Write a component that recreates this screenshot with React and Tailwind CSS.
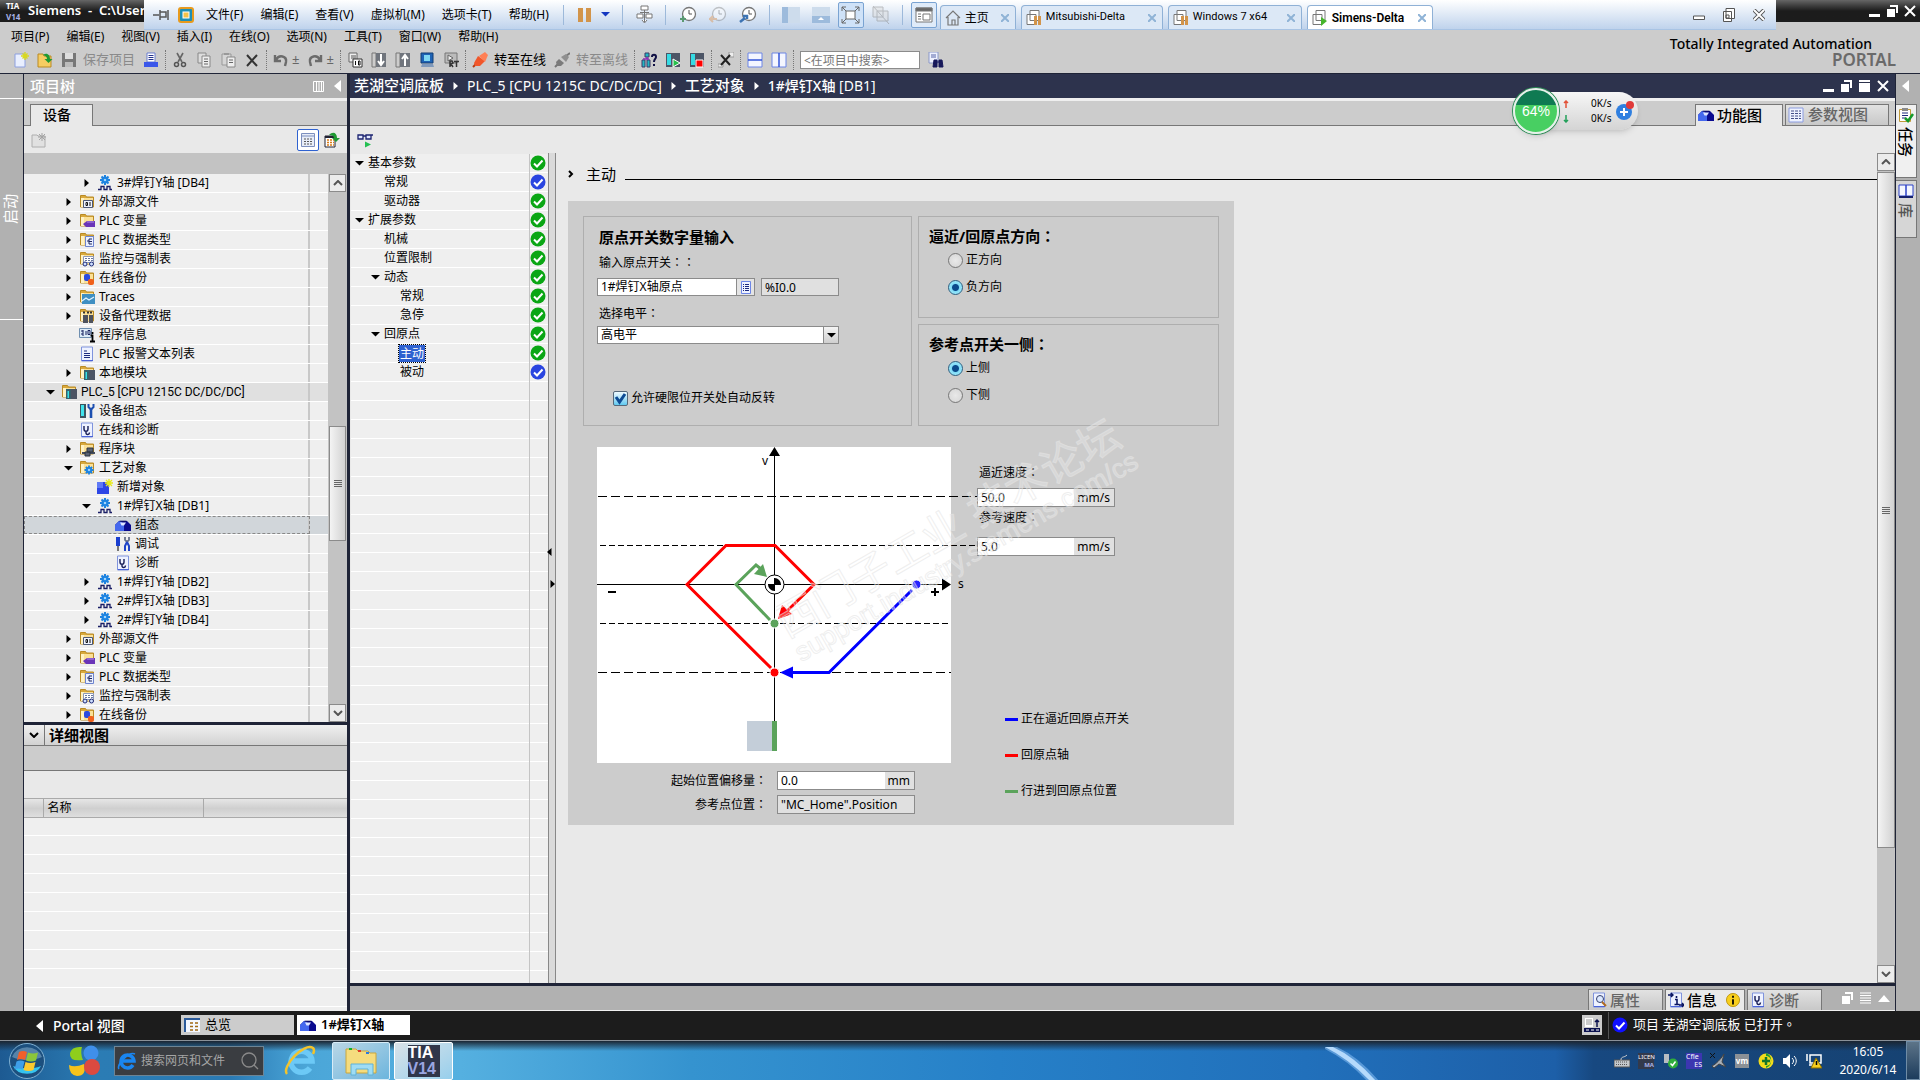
import { Fragment } from "react";

/* ---------- data ---------- */

const vmMenus = ["文件(F)", "编辑(E)", "查看(V)", "虚拟机(M)", "选项卡(T)", "帮助(H)"];

const tiaMenus = [
  "项目(P)",
  "编辑(E)",
  "视图(V)",
  "插入(I)",
  "在线(O)",
  "选项(N)",
  "工具(T)",
  "窗口(W)",
  "帮助(H)",
];

const treeRows = [
  { level: 2, icon: "axis", label: "3#焊钉Y轴 [DB4]", arrow: "right" },
  { level: 1, icon: "source", label: "外部源文件", arrow: "right" },
  { level: 1, icon: "tags", label: "PLC 变量", arrow: "right" },
  { level: 1, icon: "types", label: "PLC 数据类型", arrow: "right" },
  { level: 1, icon: "watch", label: "监控与强制表", arrow: "right" },
  { level: 1, icon: "backup", label: "在线备份", arrow: "right" },
  { level: 1, icon: "traces", label: "Traces", arrow: "right" },
  { level: 1, icon: "proxy", label: "设备代理数据", arrow: "right" },
  { level: 1, icon: "info", label: "程序信息" },
  { level: 1, icon: "textlist", label: "PLC 报警文本列表" },
  { level: 1, icon: "modules", label: "本地模块", arrow: "right" },
  { level: 0, icon: "modules", label: "PLC_5 [CPU 1215C DC/DC/DC]", arrow: "down", head: true },
  { level: 1, icon: "device", label: "设备组态" },
  { level: 1, icon: "diag", label: "在线和诊断" },
  { level: 1, icon: "blocks", label: "程序块", arrow: "right" },
  { level: 1, icon: "tech", label: "工艺对象", arrow: "down" },
  { level: 2, icon: "newobj", label: "新增对象" },
  { level: 2, icon: "axis", label: "1#焊钉X轴 [DB1]", arrow: "down" },
  { level: 3, icon: "toolbox", label: "组态", selected: true },
  { level: 3, icon: "tools", label: "调试" },
  { level: 3, icon: "diag", label: "诊断" },
  { level: 2, icon: "axis", label: "1#焊钉Y轴 [DB2]", arrow: "right" },
  { level: 2, icon: "axis", label: "2#焊钉X轴 [DB3]", arrow: "right" },
  { level: 2, icon: "axis", label: "2#焊钉Y轴 [DB4]", arrow: "right" },
  { level: 1, icon: "source", label: "外部源文件", arrow: "right" },
  { level: 1, icon: "tags", label: "PLC 变量", arrow: "right" },
  { level: 1, icon: "types", label: "PLC 数据类型", arrow: "right" },
  { level: 1, icon: "watch", label: "监控与强制表", arrow: "right" },
  { level: 1, icon: "backup", label: "在线备份", arrow: "right" },
];

const navRows = [
  { level: 0, label: "基本参数", open: true, state: "green" },
  { level: 1, label: "常规", state: "blue" },
  { level: 1, label: "驱动器", state: "green" },
  { level: 0, label: "扩展参数", open: true, state: "green" },
  { level: 1, label: "机械", state: "green" },
  { level: 1, label: "位置限制", state: "green" },
  { level: 1, label: "动态", open: true, state: "green" },
  { level: 2, label: "常规", state: "green" },
  { level: 2, label: "急停", state: "green" },
  { level: 1, label: "回原点", open: true, state: "green" },
  { level: 2, label: "主动", state: "green", selected: true },
  { level: 2, label: "被动", state: "blue" },
];

const legend = [
  { color: "bg-[#0000ff]", label: "正在逼近回原点开关" },
  { color: "bg-[#ff0000]", label: "回原点轴" },
  { color: "bg-[#5ba35b]", label: "行进到回原点位置" },
];

/* ---------- icons ---------- */

const Svg = ({ size = 16, children, className = "" }) => (
  <svg width={size} height={size} viewBox="0 0 16 16" className={`shrink-0 ${className}`} aria-hidden="true">
    {children}
  </svg>
);

const Folder = () => (
  <>
    <path d="M1.500 1.500h5l1 1.500h7v10h-13z" fill="#d9a93c" stroke="#b98a24" />
    <path d="M2 4h12v9H2z" fill="#fbe096" />
    <path d="M2 4h3v9H2z" fill="#fff2c4" />
  </>
);

const Gear = ({ x = 8, y = 5, s = 1 }) => (
  <g transform={`translate(${x} ${y}) scale(${s})`} stroke="#1e83e0" strokeWidth="2">
    <path d="M0-5V5M-5 0H5M-3.500-3.500L3.500 3.500M3.500-3.500L-3.500 3.500" />
    <circle r="2.6" fill="#2f9bf2" />
    <circle r="1" fill="#cfe8ff" stroke="none" />
  </g>
);

const Page = () => (
  <>
    <path d="M2.500 1h11v14h-11z" fill="#eef2ff" stroke="#7f93dd" />
    <path d="M3 14.500h11" stroke="#4a63d8" />
  </>
);

const Scope = () => (
  <path d="M5 4v3c0 3 4 3 4 0V4M7 9.500v1.500c0 2 3.500 2 3.500-.5" fill="none" stroke="#151b55" strokeWidth="1.400" />
);

const Toolbox = () => (
  <>
    <path d="M0 8l4-4h8l4 4v6H0z" fill="#0b0b8f" />
    <path d="M0 8l4-4h2l3 4v6H0z" fill="#4468ee" />
    <path d="M5 5.500h6l-2 3H6.500z" fill="#dfe6ff" />
    <path d="M4.500 4.200h7" stroke="#0a0a60" />
  </>
);

const treeIcons = {
  axis: (
    <>
      <Gear />
      <path d="M1 14.500h3v-3h3v3h3v-3h3v3h2" fill="none" stroke="#1a1f66" strokeWidth="1.300" />
    </>
  ),
  source: (
    <>
      <Folder />
      <path d="M4.500 6.500h9v7h-9z" fill="#eef3ff" stroke="#4b5877" />
      <path d="M7 8.500h1.500v3H7zM11 8v4" fill="none" stroke="#111" />
    </>
  ),
  tags: (
    <>
      <Folder />
      <path d="M4 11l4-3h8v6H7z" fill="#6a35b8" />
      <path d="M8 9h7" stroke="#b08ae6" />
    </>
  ),
  types: (
    <>
      <Folder />
      <path d="M6.500 4.500h8v10h-8z" fill="#eaf0ff" stroke="#6d84cf" />
      <path d="M8 9h2M10 7v5M10 7h3M10 9.500h3M10 12h3" stroke="#1c2660" />
    </>
  ),
  watch: (
    <>
      <Folder />
      <path d="M4.500 5.500h10v6h-10z" fill="#fff" stroke="#8b98bb" />
      <path d="M6 7.500h8M6 9.500h8" stroke="#68789f" strokeDasharray="2 1" />
      <circle cx="6" cy="13" r="2" fill="#cfe0ff" stroke="#1d2a7a" />
      <circle cx="12.500" cy="13" r="2" fill="#cfe0ff" stroke="#1d2a7a" />
    </>
  ),
  backup: (
    <>
      <Folder />
      <rect x="5" y="4" width="6" height="7" rx="2" fill="#2c4be0" />
      <rect x="9" y="9" width="6" height="6" rx="2" fill="#f0611c" />
    </>
  ),
  traces: (
    <>
      <Folder />
      <path d="M3 5h13v10H3z" fill="#3f8fc2" />
      <path d="M3 12l4-3 3 2 5-3" fill="none" stroke="#dff2ff" strokeWidth="1.300" />
    </>
  ),
  proxy: (
    <>
      <Folder />
      <path d="M4 7h5v8H4zM10 7h4v8h-4z" fill="#4e535e" />
      <path d="M4 4.500h2M8 4.500h2M11 4.500h2" stroke="#333" strokeWidth="2" />
    </>
  ),
  info: (
    <>
      <path d="M.5 1.500h12v9H.5z" fill="#dcebf8" stroke="#6f8fb0" />
      <path d="M2 4h2M2 7h2M4 3v6M7 4v4M9 3.500h2v4H9z" fill="none" stroke="#16205e" />
      <path d="M13.500 5v2M11.500 8.500h2V14M11 14.500h5" fill="none" stroke="#000" strokeWidth="1.800" />
    </>
  ),
  textlist: (
    <>
      <Page />
      <path d="M5 5h3M5 7.500h6M5 9.500h6M5 11.500h6" stroke="#1c2a7e" />
    </>
  ),
  modules: (
    <>
      <Folder />
      <path d="M5 5h5v10H5z" fill="#37616c" />
      <path d="M6.500 7h1.500v7H6.500z" fill="#35e0e8" />
      <path d="M10 5h6v10h-6z" fill="#4c5464" />
    </>
  ),
  device: (
    <>
      <path d="M1 1h6v14H1z" fill="#3c5560" />
      <path d="M2 2h3v11H2z" fill="#3fe3ec" />
      <path d="M12 6v9" stroke="#1c4fb0" strokeWidth="2.600" />
      <path d="M9.500 1v3L12 6.500 14.500 4V1" fill="none" stroke="#1c4fb0" strokeWidth="2" />
    </>
  ),
  diag: (
    <>
      <Page />
      <Scope />
    </>
  ),
  blocks: (
    <>
      <Folder />
      <path d="M3 12h13" stroke="#444d5c" strokeWidth="2" />
      <path d="M8 7h6v4H8zM6 11h5v4H6z" fill="#596273" stroke="#2d3440" />
    </>
  ),
  tech: (
    <>
      <Folder />
      <Gear x={10} y={10} s={0.9} />
    </>
  ),
  newobj: (
    <>
      <path d="M0 3h12v12H0z" fill="#2d46e6" />
      <path d="M0 3h6v6H0z" fill="#5f79f5" />
      <path d="M12 0v8M8 4h8M9 1l6 6M15 1L9 7" stroke="#e8ea1a" strokeWidth="1.300" />
    </>
  ),
  toolbox: <Toolbox />,
  tools: (
    <>
      <path d="M1 1h4v9H1z" fill="#1a3fd0" />
      <path d="M3 10v5" stroke="#777" strokeWidth="2" />
      <path d="M10 1v3l2 2 2-2V1" fill="none" stroke="#66708a" strokeWidth="1.800" />
      <path d="M12 6l-2 4v5M12 6l2 4v5" fill="none" stroke="#1f44c8" strokeWidth="2" />
    </>
  ),
};

const toolIcons = {
  new: (
    <>
      <path d="M2 2h10v13H2z" fill="#e9efff" stroke="#8da0e0" />
      <path d="M12 0v8M8 4h8M9.500 1.500l5 5M14.500 1.500l-5 5" stroke="#d8d81e" strokeWidth="1.400" />
    </>
  ),
  open: (
    <>
      <path d="M1 2h5l1 2h7v11H1z" fill="#f6cd62" stroke="#b98a24" />
      <path d="M6 3c4-3 7 0 7 4h2.500l-4 4-4-4H10c0-2-1-3-4-4z" fill="#1f9a32" />
    </>
  ),
  save: (
    <>
      <path d="M1 1h14v14H1z" fill="#777" />
      <path d="M4 1h8v6H4z" fill="#ddd" />
      <path d="M4 10h8v5H4z" fill="#bbb" />
    </>
  ),
  print: (
    <>
      <path d="M4 1h8v9H4z" fill="#fff" stroke="#6a7fd0" />
      <path d="M5.500 3.500h5M5.500 5.500h5M5.500 7.500h5" stroke="#24348e" />
      <path d="M1 10h14v5H1z" fill="#3b57ea" />
    </>
  ),
  cut: (
    <>
      <path d="M5 1l5 9M11 1L6 10" stroke="#666" strokeWidth="1.600" />
      <circle cx="4.500" cy="12.500" r="2" fill="none" stroke="#555" strokeWidth="1.500" />
      <circle cx="11.500" cy="12.500" r="2" fill="none" stroke="#555" strokeWidth="1.500" />
    </>
  ),
  copy: (
    <>
      <path d="M2 1h8v10H2z" fill="#ddd" stroke="#888" />
      <path d="M6 4h8v11H6z" fill="#eee" stroke="#888" />
      <path d="M8 7h4M8 9.500h4M8 12h4" stroke="#666" />
    </>
  ),
  paste: (
    <>
      <path d="M2 2h9v11H2z" fill="#d5d5d5" stroke="#999" />
      <path d="M4 1h5v2H4z" fill="#999" />
      <path d="M7 5h8v10H7z" fill="#eee" stroke="#888" />
      <path d="M9 8h4M9 10.500h4" stroke="#666" />
    </>
  ),
  delete: <path d="M3 3l10 11M13 3L3 14" stroke="#333" strokeWidth="2" />,
  undo: <path d="M2 3v6h6M3 8c3-6 11-4 10 2l-1 4" fill="none" stroke="#6b6b6b" strokeWidth="2.400" />,
  redo: <path d="M14 3v6H8M13 8C10 2 2 4 3 10l1 4" fill="none" stroke="#6b6b6b" strokeWidth="2.400" />,
  compile: (
    <>
      <path d="M2 1h8v9H2z" fill="#eee" stroke="#666" />
      <path d="M4 4h5M4 6h5" stroke="#555" />
      <path d="M6 7h9v8H6z" fill="#fff" stroke="#333" />
      <path d="M8.500 9v4M11.500 9h1.500v4h-1.500z" fill="none" stroke="#111" />
    </>
  ),
  down: (
    <>
      <path d="M1 1h4v14H1z" fill="#ccc" stroke="#777" />
      <path d="M5 1h10v14H5z" fill="#70757d" />
      <path d="M10 2v10M7 9l3 4 3-4" fill="none" stroke="#fff" strokeWidth="2" />
    </>
  ),
  up: (
    <>
      <path d="M1 1h4v14H1z" fill="#ccc" stroke="#777" />
      <path d="M5 1h10v14H5z" fill="#70757d" />
      <path d="M10 14V4M7 7l3-4 3 4" fill="none" stroke="#fff" strokeWidth="2" />
    </>
  ),
  sim: (
    <>
      <path d="M2 1h12v10H2z" fill="#1e63b5" stroke="#123e74" />
      <path d="M5 3h6v6H5z" fill="#7fd7f2" />
      <path d="M3 12h11l1 3H2z" fill="#7f99bb" />
    </>
  ),
  rt: (
    <>
      <path d="M2 1h12v10H2z" fill="#bbb" stroke="#777" />
      <path d="M5 3l5 3-5 3z" fill="#eee" stroke="#666" />
      <path d="M7 15V9h2l1 2-2 1 2 3M11 9.500h5M13.500 9v6" fill="none" stroke="#333" strokeWidth="1.500" />
    </>
  ),
  online: (
    <>
      <path d="M1 15l4-4" stroke="#b33a10" strokeWidth="2" />
      <path d="M2 11l4-7 7 5-5 5H3z" fill="#f0562a" />
      <path d="M7 4l6-4 3 3-3 7z" fill="#ff8055" />
    </>
  ),
  offline: (
    <>
      <path d="M1 15l3-3M12 4l4-3" stroke="#777" strokeWidth="2" />
      <path d="M2 10l3-3 5 4-3 3H3z" fill="#7b7b7b" />
      <path d="M7 5l5-3 3 3-3 5z" fill="#8f8f8f" />
    </>
  ),
  nodes: (
    <>
      <path d="M4 1h4v4H4zM1 8h3v7H1zM6 8h3v7H6z" fill="#23b8c4" stroke="#3a3a66" />
      <path d="M6 5v2M2 7h6" stroke="#8a2ab5" strokeWidth="1.500" />
      <path d="M11 5c0-3 4-3 4 0 0 2-2 2-2 5M13 12v2" fill="none" stroke="#101044" strokeWidth="2" />
    </>
  ),
  start: (
    <>
      <path d="M1 1h14v14H1z" fill="#4c5566" />
      <path d="M2 2h4v11H2z" fill="#36dbe4" />
      <path d="M8 7l7 4-7 4z" fill="#26c04c" stroke="#fff" />
    </>
  ),
  stop: (
    <>
      <path d="M1 1h14v14H1z" fill="#4c5566" />
      <path d="M2 2h4v11H2z" fill="#36dbe4" />
      <path d="M7 8h7v7H7z" fill="#f00" stroke="#fff" />
    </>
  ),
  cross: (
    <>
      <path d="M11 0h5v5h-5zM0 12h5v3H0z" fill="#eee" stroke="#999" />
      <path d="M3 3l9 10M12 3L3 13" stroke="#222" strokeWidth="2" />
    </>
  ),
  splitH: (
    <>
      <path d="M1 1h14v14H1z" fill="#f4f6ff" stroke="#6d86e6" />
      <path d="M1 8h14" stroke="#3355d8" strokeWidth="1.500" />
    </>
  ),
  splitV: (
    <>
      <path d="M1 1h14v14H1z" fill="#f4f6ff" stroke="#6d86e6" />
      <path d="M8 1v14" stroke="#3355d8" strokeWidth="1.500" />
    </>
  ),
  find: (
    <>
      <path d="M1 0h9v11H1z" fill="#eef1ff" stroke="#8a98c8" />
      <path d="M3 3h5M3 5h5" stroke="#5866a8" />
      <path d="M6 8h3v7H5zM11 8h3l1 7h-4zM9 10h2" fill="#17185a" stroke="#17185a" />
    </>
  ),
};

const ToolButton = ({ name, label }) => (
  <button aria-label={label} className="flex shrink-0">
    <Svg>{toolIcons[name]}</Svg>
  </button>
);

const ToolSep = () => <span className="-mx-[2px] h-5 border-l border-dotted border-[#777]" />;

const Arrow = ({ dir, className = "" }) => (
  <svg width="9" height="9" viewBox="0 0 9 9" className={`shrink-0 ${className}`} fill="currentColor" aria-hidden="true">
    {dir === "down" ? <path d="M0 2h9L4.500 6.500z" /> : <path d="M2.500 0v8L7 4z" />}
  </svg>
);

const StateIcon = ({ state }) => (
  <Svg>
    <circle cx="8" cy="8" r="7.500" fill={state === "green" ? "#0aa614" : "#2a45e0"} />
    <path d="M4 8.500l3 3 5.500-6" fill="none" stroke="#fff" strokeWidth="2" />
  </Svg>
);

/* ---------- shared parts ---------- */

// full-width punctuation centred in its cell
const Mark = ({ children = "：" }) => (
  <span className="font-['Noto_Sans_CJK_TC',sans-serif] leading-none">{children}</span>
);

const ScrollButton = ({ dir }) => (
  <button
    aria-label={dir === "up" ? "向上滚动" : "向下滚动"}
    className="flex h-[18px] shrink-0 items-center justify-center border border-[#8b8b8b] bg-[#ececec]"
  >
    <svg width="10" height="6" viewBox="0 0 10 6" fill="none" stroke="#555" strokeWidth="2" aria-hidden="true">
      {dir === "up" ? <path d="M1 5l4-4 4 4" /> : <path d="M1 1l4 4 4-4" />}
    </svg>
  </button>
);

const Grip = () => (
  <span className="flex w-2 flex-col gap-px">
    <i className="h-px bg-[#666]" />
    <i className="h-px bg-[#666]" />
    <i className="h-px bg-[#666]" />
    <i className="h-px bg-[#666]" />
  </span>
);

const WindowIcons = () => (
  <div className="ml-auto flex items-center gap-[7px] text-white">
    <svg width="11" height="12" viewBox="0 0 11 12" aria-hidden="true"><path d="M0 10.500h11" stroke="currentColor" strokeWidth="3" /></svg>
    <svg width="11" height="12" viewBox="0 0 11 12" fill="currentColor" aria-hidden="true"><path d="M3 0h8v8H9V2H3zM0 4h8v8H0z" /></svg>
  </div>
);

const CloseX = ({ className = "" }) => (
  <svg width="12" height="12" viewBox="0 0 12 12" className={className} fill="none" stroke="currentColor" strokeWidth="2" aria-hidden="true">
    <path d="M1 1l10 10M11 1L1 11" />
  </svg>
);

/* ---------- VMware strip ---------- */

const VmTab = ({ label, icon, active, className = "" }) => (
  <div
    className={`mr-[5px] flex h-6 items-center rounded-t-sm border border-b-0 border-[#8fb1d6] pl-1 pr-[6px] ${className}
      ${active ? "bg-white font-semibold" : "bg-[#dce8f6]"}`}
  >
    <Svg className="mr-1">{icon}</Svg>
    <button className="flex-1 whitespace-nowrap text-left">{label}</button>
    <button aria-label="关闭" className="text-[#8fb3d6]">
      <svg width="8" height="8" viewBox="0 0 8 8" stroke="currentColor" strokeWidth="2" aria-hidden="true">
        <path d="M0 0l8 8M8 0L0 8" />
      </svg>
    </button>
  </div>
);

const vmPages = <path d="M4 .5h9v10H4zM1 4.500h9v10H1z" fill="#fff" stroke="#777" />;

const VmSep = ({ className = "" }) => <span className={`h-5 w-px bg-[#9db9da] ${className}`} />;

const Clock = ({ faded, children }) => (
  <svg width="18" height="18" viewBox="0 0 18 18" fill="none" className={faded ? "opacity-40" : ""} aria-hidden="true">
    <circle cx="10" cy="8" r="6.500" fill="#fff" stroke="#777" strokeWidth="1.300" />
    <path d="M10 4v4h3" stroke="#555" />
    {children}
  </svg>
);

const VmBar = () => (
  <div className="absolute left-36 right-36 top-0 z-20 flex h-[30px] items-center border-b border-[#a9c4e4] bg-linear-to-b from-white to-[#bfd3ec] text-xs text-black">
    <svg width="17" height="12" viewBox="0 0 17 12" className="ml-[9px] shrink-0" fill="none" stroke="#555" aria-hidden="true">
      <path d="M0 6h6M7 1v10M7 3h6v5H7M15 1v10" strokeWidth="1.500" />
    </svg>
    <svg width="18" height="18" viewBox="0 0 18 18" className="ml-[7px] shrink-0" aria-hidden="true">
      <rect x="1" y="1" width="16" height="16" rx="3" fill="#e79a1e" />
      <rect x="3" y="3" width="12" height="12" rx="1" fill="#1d8fb6" />
      <rect x="6" y="6" width="6" height="6" fill="#f4c14a" stroke="#fff" />
    </svg>
    <nav className="ml-[11px] flex gap-[17px] whitespace-nowrap">
      {vmMenus.map((m) => (
        <button key={m}>{m}</button>
      ))}
    </nav>
    <VmSep className="ml-[14px]" />
    <svg width="13" height="14" viewBox="0 0 13 14" className="ml-[14px] shrink-0" fill="#d2944a" aria-hidden="true"><path d="M0 0h5v14H0zM8 0h5v14H8z" /></svg>
    <Arrow dir="down" className="ml-[10px] text-[#1437c0]" />
    <VmSep className="ml-3" />
    <svg width="17" height="19" viewBox="0 0 17 19" className="ml-[13px] shrink-0" fill="#fff" stroke="#777" aria-hidden="true">
      <path d="M5 1h7v4H5zM1 9h6v4H1zM10 9h6v4h-6zM8.500 5v12M4 7.500h9M6 15l2.500 3 2.500-3" />
    </svg>
    <VmSep className="ml-3" />
    <div className="ml-[13px] flex gap-3">
      <Clock><path d="M1 13h6M4 10v6" stroke="#5b9a72" strokeWidth="2" /></Clock>
      <Clock faded><path d="M0 13h8M4 10l-3 3 3 3" stroke="#e08a3a" strokeWidth="2" /></Clock>
      <Clock><path d="M1 16l5-4M4 10h4v3" stroke="#3d74b3" strokeWidth="2.500" /></Clock>
    </div>
    <VmSep className="ml-3" />
    <svg width="18" height="18" viewBox="0 0 18 18" className="ml-3 shrink-0" aria-hidden="true">
      <path d="M0 1h18v16H0z" fill="#cddcec" /><path d="M0 1h6v16H0z" fill="#9dbbdc" />
    </svg>
    <svg width="18" height="18" viewBox="0 0 18 18" className="ml-3 shrink-0" aria-hidden="true">
      <path d="M0 1h18v16H0z" fill="#cddcec" /><path d="M0 10h18v7H0z" fill="#9dbbdc" /><path d="M6 14h6l-3-3z" fill="#fff" />
    </svg>
    <button aria-label="全屏" className="ml-2 flex h-[26px] w-[26px] items-center justify-center rounded-xs border border-[#7aa3d2] bg-[#cfe2f8]">
      <svg width="19" height="18" viewBox="0 0 19 18" fill="none" stroke="#666" aria-hidden="true">
        <path d="M5 5h9v8H5z" fill="#fff" />
        <path d="M1 5V1h4M14 1h4v4M18 13v4h-4M5 17H1v-4M1 1l4 4M18 1l-4 4M18 17l-4-4M1 17l4-4" />
      </svg>
    </button>
    <svg width="18" height="20" viewBox="0 0 18 20" className="ml-2 shrink-0 opacity-50" fill="#ddd" stroke="#888" aria-hidden="true">
      <path d="M1 2h10v10H1zM5 6h11v10H5zM1 1l16 18" />
    </svg>
    <VmSep className="ml-3" />
    <button aria-label="控制台视图" className="ml-2 flex h-[26px] w-[26px] items-center justify-center rounded-xs border border-[#7aa3d2] bg-[#dfebf9]">
      <svg width="18" height="16" viewBox="0 0 18 16" fill="#fff" stroke="#777" aria-hidden="true">
        <path d="M1 1h16v14H1zM8 7h7v6H8z" /><path d="M1 1h16v3H1z" fill="#666" /><path d="M3 7h3M3 9.500h3M3 12h3" />
      </svg>
    </button>
    <div className="ml-[3px] flex self-end font-['Roboto','Noto_Sans_CJK_SC',sans-serif] text-[11px]">
      <VmTab label="主页" className="w-[76px] text-xs" icon={<path d="M1 8l7-7 7 7M3 7v8h10V7M7 15v-5h3v5" fill="none" stroke="#777" strokeWidth="1.200" />} />
      <VmTab label="Mitsubishi-Delta" className="w-[142px]" icon={<>{vmPages}<path d="M8 6h3v9H8zM12 6h3v9h-3z" fill="#d2944a" /></>} />
      <VmTab label="Windows 7 x64" className="w-[134px]" icon={<>{vmPages}<path d="M8 6h3v9H8zM12 6h3v9h-3z" fill="#d2944a" /></>} />
      <VmTab label="Simens-Delta" active className="w-[126px] text-xs" icon={<>{vmPages}<path d="M9 7l6 4-6 5z" fill="#46b52c" /></>} />
    </div>
    <div className="ml-auto mr-[11px] flex items-center gap-[18px] text-[#555]">
      <svg width="12" height="12" viewBox="0 0 12 12" fill="#fff" stroke="currentColor" aria-hidden="true"><path d="M.5 7h11v3.500H.5z" /></svg>
      <svg width="12" height="14" viewBox="0 0 12 14" fill="#fff" stroke="currentColor" aria-hidden="true"><path d="M3 .5h8.500v10H3zM.5 3.500h8v10h-8zM3 7h3v3H3z" /></svg>
      <svg width="12" height="12" viewBox="0 0 12 12" fill="none" aria-hidden="true"><path d="M1 1l10 10M11 1L1 11" stroke="#555" strokeWidth="4" /><path d="M1 1l10 10M11 1L1 11" stroke="#fff" strokeWidth="2" /></svg>
    </div>
  </div>
);

/* ---------- TIA header ---------- */

const Header = () => (
  <header className="relative shrink-0 bg-[#ccc]">
    <div className="flex h-[22px] items-center bg-linear-to-b from-[#666] via-[#1c1c1c] to-[#1c1c1c] pl-[6px] pr-1 text-[13px] font-semibold text-white">
      <span className="mr-1 flex w-[18px] flex-col text-[8px] font-bold leading-[11px]">
        <span>TIA</span>
        <span className="text-[#a9b2e6]">V14</span>
      </span>
      <span className="whitespace-pre">Siemens  -  C:\User</span>
      <WindowIcons />
      <CloseX className="ml-[6px]" />
    </div>
    <nav className="flex h-[30px] items-center gap-[17px] pl-[11px] text-xs">
      {tiaMenus.map((m) => (
        <button key={m} className="whitespace-nowrap">{m}</button>
      ))}
    </nav>
    <div className="flex h-[21px] items-center gap-2 pb-[5px] pl-[13px] text-[13px]">
      <ToolButton name="new" label="新建" />
      <ToolButton name="open" label="打开" />
      <button className="flex items-center gap-[6px] whitespace-nowrap text-[#8a8a8a]">
        <Svg>{toolIcons.save}</Svg>
        保存项目
      </button>
      <ToolButton name="print" label="打印" />
      <ToolSep />
      <ToolButton name="cut" label="剪切" />
      <ToolButton name="copy" label="复制" />
      <ToolButton name="paste" label="粘贴" />
      <ToolButton name="delete" label="删除" />
      <ToolSep />
      <span className="flex items-center gap-[3px]">
        <ToolButton name="undo" label="撤销" />
        <span className="text-[#666]">±</span>
      </span>
      <span className="flex items-center gap-[3px]">
        <ToolButton name="redo" label="重做" />
        <span className="text-[#666]">±</span>
      </span>
      <ToolSep />
      <ToolButton name="compile" label="编译" />
      <ToolButton name="down" label="下载" />
      <ToolButton name="up" label="上传" />
      <ToolButton name="sim" label="仿真" />
      <ToolButton name="rt" label="运行系统" />
      <ToolSep />
      <button className="flex items-center gap-[6px] whitespace-nowrap"><Svg>{toolIcons.online}</Svg>转至在线</button>
      <button className="flex items-center gap-[6px] whitespace-nowrap text-[#8a8a8a]"><Svg>{toolIcons.offline}</Svg>转至离线</button>
      <ToolSep />
      <ToolButton name="nodes" label="可访问的设备" />
      <ToolButton name="start" label="启动 CPU" />
      <ToolButton name="stop" label="停止 CPU" />
      <ToolSep />
      <ToolButton name="cross" label="交叉引用" />
      <ToolSep />
      <ToolButton name="splitH" label="水平拆分" />
      <ToolButton name="splitV" label="垂直拆分" />
      <ToolSep />
      <input
        aria-label="在项目中搜索"
        placeholder="<在项目中搜索>"
        className="h-[18px] w-[120px] border border-[#8b8b8b] bg-white px-[3px] text-xs placeholder:text-[#777]"
      />
      <ToolButton name="find" label="查找" />
    </div>
    <div className="absolute right-6 top-[35px] flex flex-col text-right">
      <p className="mr-6 text-sm font-medium leading-[17px]">Totally Integrated Automation</p>
      <p className="text-[17px] font-semibold leading-[15px] text-[#6a6a6a]">PORTAL</p>
    </div>
    <VmBar />
  </header>
);

/* ---------- project tree ---------- */

const TreeRow = ({ row }) => (
  <li
    className={`flex h-[19px] border-b border-white
      ${row.selected ? "bg-[#d1d6da]" : row.head ? "bg-[#e0e0e0]" : "bg-[#efefef]"}`}
  >
    <button
      className={`flex min-w-0 flex-1 items-center whitespace-nowrap border-r-2 border-[#c8c8c8] text-left
        ${row.selected ? "outline-1 -outline-offset-1 outline-dashed outline-[#888]" : ""}`}
      style={{ paddingLeft: 22 + row.level * 18 }}
    >
      <span className="mr-[6px] flex w-[9px]">{row.arrow && <Arrow dir={row.arrow} />}</span>
      <Svg className="mr-1">{treeIcons[row.icon]}</Svg>
      <span className={row.head ? "font-['Roboto',sans-serif]" : ""}>{row.label}</span>
    </button>
    <span className="w-[18px]" />
  </li>
);

const ProjectTree = () => (
  <aside className="flex w-[326px] shrink-0 flex-col border-r-[3px] border-[#1f2437] bg-[#e9e9e9] text-xs">
    <div className="flex h-6 shrink-0 items-center bg-[#b1b1b1] px-[6px] text-[15px] font-medium text-white">
      项目树
      <svg width="11" height="11" viewBox="0 0 11 11" className="ml-auto" fill="none" stroke="#fff" aria-hidden="true">
        <path d="M.5.5h10v10H.5zM3.500 0v11M6 0v11M8.500 0v11" />
      </svg>
      <svg width="7" height="12" viewBox="0 0 7 12" className="ml-[10px]" fill="#fff" aria-hidden="true"><path d="M7 0v12L0 6z" /></svg>
    </div>
    <div className="flex h-7 shrink-0 items-end border-b border-t-[3px] border-b-[#777] border-t-[#efefef] bg-[#ccc] pl-[6px]">
      <button className="-mb-px h-[22px] w-[63px] border border-b-0 border-[#777] bg-[#e9e9e9] pb-[2px] pr-[9px] text-sm font-medium">设备</button>
    </div>
    <div className="flex h-[27px] shrink-0 items-center pl-[7px] pr-[7px]">
      <Svg className="opacity-60">
        <path d="M1 3h5l1 1h7v11H1z" fill="#ddd" stroke="#888" />
        <path d="M11 1v8M7 5h8M8 2l6 6M14 2L8 8" stroke="#777" />
      </Svg>
      <button aria-label="列表视图" className="ml-auto flex h-[22px] w-[22px] items-center justify-center rounded-xs border border-[#2f62d0] bg-white">
        <Svg>
          <path d="M1.500 1.500h13v13h-13z" fill="#e8edf8" stroke="#7c8fbe" />
          <path d="M2 4h12" stroke="#7c8fbe" />
          <path d="M4 7h9M4 9.500h9M4 12h9" stroke="#555" strokeDasharray="2 1" />
        </Svg>
      </button>
      <button aria-label="导出" className="ml-[5px] flex">
        <Svg>
          <path d="M1 4h10v11H1z" fill="#fff" stroke="#223" />
          <path d="M1 5h10" stroke="#223" strokeWidth="2" />
          <path d="M3 8h7M3 10.500h7M3 13h7" stroke="#d97b16" strokeDasharray="2 1" strokeWidth="1.500" />
          <path d="M5 3c4-4 8-2 8 3h3l-4 4-4-4h2c0-2-2-3-5-3z" fill="#1f9a32" />
        </Svg>
      </button>
    </div>
    <div className="h-[21px] shrink-0 bg-[#c3c3c3]" />
    <div className="flex min-h-0 flex-1 bg-[#c3c3c3]">
      <ul className="min-w-0 flex-1 overflow-hidden">
        {treeRows.map((row, i) => (
          <TreeRow key={i} row={row} />
        ))}
      </ul>
      <div className="flex w-[19px] flex-col px-px">
        <ScrollButton dir="up" />
        <div className="flex-[235]" />
        <div className="flex flex-[114] items-center justify-center border border-[#8b8b8b] bg-linear-to-r from-[#f4f4f4] to-[#d2d2d2]"><Grip /></div>
        <div className="flex-[164]" />
        <ScrollButton dir="down" />
      </div>
    </div>
    <div className="flex h-6 shrink-0 items-center border-b border-t-[3px] border-b-[#777] border-t-[#1f2437] bg-linear-to-b from-[#f0f0f0] to-[#d2d2d2]">
      <button aria-label="折叠" className="flex h-full w-[21px] items-center justify-center border-r border-[#777]">
        <svg width="10" height="6" viewBox="0 0 10 6" fill="none" stroke="#000" strokeWidth="2" aria-hidden="true"><path d="M1 1l4 4 4-4" /></svg>
      </button>
      <h2 className="ml-1 text-[15px] font-bold leading-5">详细视图</h2>
    </div>
    <div className="h-[25px] shrink-0 border-b border-[#777] bg-[#ccc]" />
    <div className="h-[27px] shrink-0" />
    <div className="h-[213px] shrink-0 bg-[repeating-linear-gradient(#efefef_0_18px,#fff_18px_19px)]">
      <table className="w-full table-fixed border-collapse">
        <thead>
          <tr className="h-[19px] bg-linear-to-b from-[#e6e6e6] via-[#cfcfcf] to-[#e0e0e0] text-left">
            <th className="w-[19px] border border-l-0 border-[#aaa] p-0" />
            <th className="w-[160px] border border-[#aaa] p-0 pl-1 font-normal leading-4">名称</th>
            <th className="border border-r-0 border-[#aaa] p-0" />
          </tr>
        </thead>
      </table>
    </div>
  </aside>
);

/* ---------- parameter navigation ---------- */

const NavRow = ({ row }) => (
  <li className="flex h-[19px] items-center border-b border-white">
    <a
      href="#"
      className="flex min-w-0 flex-1 items-center"
      style={{ paddingLeft: 4 + row.level * 16 }}
    >
      <span className="mr-1 flex w-[9px]">{row.open && <Arrow dir="down" />}</span>
      <span className={row.selected ? "-mx-px bg-[#2f62d0] px-px leading-[17px] text-white outline-1 outline-dotted outline-black" : ""}>
        {row.label}
      </span>
    </a>
    <span className="mr-[2px] flex"><StateIcon state={row.state} /></span>
  </li>
);

const ParamNav = () => (
  <nav className="flex w-[198px] shrink-0 flex-col pl-px pt-px text-xs">
    <div className="relative flex-1 overflow-hidden bg-[repeating-linear-gradient(#efefef_0_18px,#fff_18px_19px)]">
      <span className="absolute bottom-0 right-[18px] top-0 w-px bg-[#c4c4c4]" />
      <ul>
        {navRows.map((row, i) => (
          <NavRow key={i} row={row} />
        ))}
      </ul>
    </div>
  </nav>
);

/* ---------- form controls ---------- */

const Radio = ({ name, label, checked }) => (
  <label className="flex h-4 items-center gap-[3px]">
    <input
      type="radio"
      name={name}
      defaultChecked={checked}
      className="h-[15px] w-[15px] appearance-none rounded-full border border-[#777] bg-[radial-gradient(#e9e9e9,#d4d4d4)] checked:border-[#2b5f80] checked:bg-[radial-gradient(circle,#0b4a8c_0_3px,#7fdcf6_4px,#b8f0ff)]"
    />
    {label}
  </label>
);

const UnitField = ({ id, value, unit }) => (
  <div className="flex h-[19px] w-[138px] items-center border border-[#8b8b8b] bg-[#e0e0e0]">
    <input id={id} defaultValue={value} className="h-full min-w-0 flex-1 bg-white px-[3px]" />
    <span className="pl-[3px] pr-1">{unit}</span>
  </div>
);

const HomingDiagram = () => (
  <svg width="380" height="316" viewBox="0 0 380 316" className="shrink-0" role="img" aria-label="回原点运动曲线">
    <path d="M0 0h354v316H0z" fill="#fff" />
    <g stroke="#000" strokeDasharray="9 4">
      <path d="M1 49.500h379M1 225.500h353" />
      <path d="M3 98.500h377M3 176.500h351" strokeDasharray="6 3" />
    </g>
    <g stroke="#000">
      <path d="M0 137.500h350M177.500 4v270" />
    </g>
    <path d="M177.500 0l5.500 9h-11zM354 137.500l-9-6v12z" />
    <path d="M11 145h8M334 145h8M338 141v8" stroke="#000" strokeWidth="2" />
    <text x="165" y="18" fontSize="12">v</text>
    <text x="361" y="141" fontSize="12">s</text>
    <g fill="none" strokeWidth="3">
      <path d="M174 221L90 137.500 129 98.500h49L217 137.500 187 167" stroke="#f00" />
      <path d="M173 173L139 137.500 159 118l5 4" stroke="#5ba35b" />
      <path d="M315 143L232 225.500h-40" stroke="#00f" />
    </g>
    <path d="M181 172l4-14 10 9z" fill="#f00" />
    <path d="M170 130l-13-3 9-10z" fill="#5ba35b" />
    <path d="M183 225.500l13-6v12z" fill="#00f" />
    <g stroke="#fff">
      <circle cx="177.500" cy="225.500" r="4.500" fill="#f00" />
      <circle cx="177.500" cy="176.500" r="4.500" fill="#5ba35b" />
      <circle cx="319.500" cy="137.500" r="4.500" fill="#22f" />
    </g>
    <circle cx="177.500" cy="137.500" r="9.500" fill="#fff" stroke="#000" />
    <path d="M177.500 137.500V131a6.500 6.500 0 0 1 6.500 6.500zM177.500 137.500h-6.500a6.500 6.500 0 0 0 6.500 6.500z" />
    <path d="M177.500 131v13M171 137.500h13" stroke="#000" />
    <path d="M150 274h25v30h-25z" fill="#c4ced9" />
    <path d="M175 274h5v30h-5z" fill="#5ba35b" />
  </svg>
);

const Watermark = () => (
  <svg
    width="400"
    height="280"
    viewBox="0 0 400 280"
    className="pointer-events-none absolute left-[208px] top-[209px]"
    aria-hidden="true"
  >
    <g
      transform="rotate(-30 24 230)"
      fill="#fff"
      fillOpacity=".25"
      stroke="#e4e4e4"
      strokeOpacity=".6"
      style={{ fontFamily: '"Liberation Sans", "Noto Sans CJK SC", sans-serif' }}
    >
      <text x="13" y="222" fontSize="42">西门子工业 技术论坛</text>
      <text x="14" y="250" fontSize="27">support.industry.siemens.com/cs</text>
    </g>
  </svg>
);

const HomingForm = () => (
  <div className="relative w-[666px] bg-[#ccc] p-[15px] pb-[11px] text-xs">
    <div className="grid grid-cols-[329px_301px] grid-rows-[102px_102px] gap-[6px]">
      <fieldset className="row-span-2 border border-[#aeaeae] pl-[13px] pt-[11px]">
        <h3 className="pl-[2px] text-[15px] font-bold leading-[18px]">原点开关数字量输入</h3>
        <label htmlFor="homeSwitch" className="mt-[9px] block h-4 pl-[2px] leading-4">输入原点开关<Mark>：：</Mark></label>
        <div className="mt-[7px] flex gap-[6px]">
          <div className="flex h-[18px] w-[158px] border border-[#8b8b8b] bg-white">
            <input id="homeSwitch" defaultValue="1#焊钉X轴原点" className="min-w-0 flex-1 px-[3px]" />
            <button aria-label="选择变量" className="flex w-[18px] items-center justify-center border-l border-[#8b8b8b] bg-[#e4e4e4]">
              <svg width="10" height="13" viewBox="0 0 10 13" aria-hidden="true">
                <path d="M.5.5h9v12h-9z" fill="#eef2ff" stroke="#6d86e6" />
                <path d="M2 3.500h1M4 3.500h4M2 5.500h1M4 5.500h4M2 7.500h1M4 7.500h4M2 9.500h1M4 9.500h4" stroke="#1c2a7e" />
              </svg>
            </button>
          </div>
          <input aria-label="地址" readOnly value="%I0.0" className="h-[18px] w-[78px] border border-[#8b8b8b] bg-[#e0e0e0] px-[3px]" />
        </div>
        <label htmlFor="level" className="mt-[10px] block h-4 pl-[2px] leading-4">选择电平<Mark /></label>
        <div className="relative mt-1 h-[18px] w-[242px]">
          <select id="level" className="h-full w-full appearance-none border border-[#8b8b8b] bg-white px-[3px]">
            <option>高电平</option>
          </select>
          <span className="pointer-events-none absolute right-0 top-0 flex h-[18px] w-4 items-center justify-center border border-[#8b8b8b] bg-linear-to-b from-[#f4f4f4] to-[#cfcfcf]">
            <Arrow dir="down" />
          </span>
        </div>
        <label className="ml-4 mt-[46px] flex h-4 items-center gap-[3px]">
          <span className="relative flex">
            <input type="checkbox" defaultChecked className="h-[15px] w-[15px] appearance-none rounded-xs border border-[#55687a] bg-linear-to-b from-[#eefaff] to-[#5ec9f0]" />
            <svg width="15" height="15" viewBox="0 0 15 15" className="pointer-events-none absolute inset-0" fill="none" stroke="#0d4a94" strokeWidth="3" aria-hidden="true">
              <path d="M3 6l3.500 5L12 3" />
            </svg>
          </span>
          允许硬限位开关处自动反转
        </label>
      </fieldset>

      <fieldset className="border border-[#aeaeae] pl-[10px] pt-[10px]">
        <h3 className="h-[18px] text-[15px] font-bold leading-[18px]">逼近/回原点方向<Mark /></h3>
        <div className="mt-[7px] flex flex-col gap-[11px] pl-[19px]">
          <Radio name="direction" label="正方向" />
          <Radio name="direction" label="负方向" checked />
        </div>
      </fieldset>

      <fieldset className="border border-[#aeaeae] pl-[10px] pt-[10px]">
        <h3 className="h-[18px] text-[15px] font-bold leading-[18px]">参考点开关一侧<Mark /></h3>
        <div className="mt-[7px] flex flex-col gap-[11px] pl-[19px]">
          <Radio name="side" label="上侧" checked />
          <Radio name="side" label="下侧" />
        </div>
      </fieldset>
    </div>

    <div className="flex pl-[14px] pt-[21px]">
      <div>
        <HomingDiagram />
        <div className="grid grid-cols-[170px_138px] gap-x-[10px] gap-y-[5px] pt-2">
          <label htmlFor="offset" className="h-[19px] text-right leading-[19px]">起始位置偏移量<Mark /></label>
          <UnitField id="offset" value="0.0" unit="mm" />
          <label htmlFor="refpos" className="h-[19px] text-right leading-[19px]">参考点位置<Mark /></label>
          <input id="refpos" readOnly value={'"MC_Home".Position'} className="h-[19px] border border-[#8b8b8b] bg-[#e0e0e0] px-[3px]" />
        </div>
      </div>
      <div className="pt-[18px]">
        <label htmlFor="approach" className="block h-4 pl-[2px] leading-4">逼近速度<Mark /></label>
        <div className="mt-[7px]"><UnitField id="approach" value="50.0" unit="mm/s" /></div>
        <label htmlFor="refspeed" className="mt-[3px] block h-4 pl-[2px] leading-4">参考速度<Mark /></label>
        <div className="mt-[11px]"><UnitField id="refspeed" value="5.0" unit="mm/s" /></div>
        <ul className="mt-[155px] flex flex-col gap-5 whitespace-nowrap pl-7">
          {legend.map((l) => (
            <li key={l.label} className="flex h-4 items-center gap-[3px]">
              <i className={`h-[3px] w-[13px] ${l.color}`} />
              {l.label}
            </li>
          ))}
        </ul>
      </div>
    </div>

    <Watermark />
  </div>
);

/* ---------- speed widget ---------- */

const SpeedBall = () => (
  <div className="absolute right-[257px] top-[14px] z-10 flex h-[46px] items-center">
    <div className="z-10 flex h-[46px] w-[46px] items-center justify-center rounded-full border-2 border-[#e6f2ea] bg-linear-to-b from-[#0f7a52] from-35% to-[#48cf62] to-36% font-['Liberation_Sans',sans-serif] text-sm text-white shadow-md ring-1 ring-[#2b8d55]">
      64%
    </div>
    <div className="-ml-6 flex h-[38px] w-[103px] items-center rounded-r-full bg-linear-to-b from-[#f7f7f7] to-[#d4d4d4] pl-[28px] text-[10px] shadow-md">
      <div className="flex flex-col gap-[7px]">
        <svg width="6" height="8" viewBox="0 0 6 8" fill="none" stroke="#e2533a" strokeWidth="1.500" aria-hidden="true"><path d="M3 8V1M1 3l2-2 2 2" /></svg>
        <svg width="6" height="8" viewBox="0 0 6 8" fill="none" stroke="#23a05a" strokeWidth="1.500" aria-hidden="true"><path d="M3 0v7M1 5l2 2 2-2" /></svg>
      </div>
      <div className="ml-[22px] leading-[15px]">
        <p>0K/s</p>
        <p>0K/s</p>
      </div>
      <svg width="20" height="22" viewBox="0 0 20 22" className="ml-1 shrink-0" aria-hidden="true">
        <circle cx="9" cy="12" r="8" fill="#2f7fe0" />
        <path d="M9 8v8M5 12h8" stroke="#fff" strokeWidth="2" />
        <circle cx="15" cy="5" r="4" fill="#e03a3a" />
      </svg>
    </div>
  </div>
);

/* ---------- editor ---------- */

const Editor = () => (
  <section className="relative flex min-w-0 flex-1 flex-col bg-[#e9e9e9]">
    <div className="flex h-6 shrink-0 items-center gap-[7px] whitespace-nowrap bg-[#2d334d] pl-1 pr-[6px] text-sm text-white">
      <span className="text-[15px] font-medium">芜湖空调底板</span>
      <Arrow />
      <span>PLC_5 [CPU 1215C DC/DC/DC]</span>
      <Arrow />
      <span className="text-[15px] font-medium">工艺对象</span>
      <Arrow />
      <span><span className="font-medium">1#焊钉X轴</span> [DB1]</span>
      <WindowIcons />
      <svg width="11" height="12" viewBox="0 0 11 12" fill="#fff" aria-hidden="true"><path d="M0 0h11v2H0zM0 3h11v9H0z" /></svg>
      <CloseX />
    </div>
    <div className="flex h-7 shrink-0 items-end justify-end gap-[2px] border-b border-t-[3px] border-b-[#777] border-t-[#efefef] bg-[#ccc] pr-[6px] text-[15px]">
      <button className="-mb-px flex h-[22px] w-[88px] items-center gap-[3px] whitespace-nowrap border border-b-0 border-[#777] bg-[#e9e9e9] pb-px pl-[2px] font-medium">
        <Svg><Toolbox /></Svg>
        功能图
      </button>
      <button className="flex h-[21px] w-[104px] items-center gap-1 whitespace-nowrap border border-b-0 border-[#777] bg-linear-to-b from-[#e2e2e2] to-[#c8c8c8] pb-px pl-[2px] font-medium text-[#666]">
        <Svg>
          <path d="M1 1h14v14H1z" fill="#eef2ff" stroke="#8b9ce0" />
          <path d="M3 4h10M3 6.500h10M3 9h10M3 11.500h10" stroke="#444e88" strokeDasharray="3 1" />
        </Svg>
        参数视图
      </button>
    </div>
    <div className="flex h-[27px] shrink-0 items-center pl-[7px]">
      <Svg>
        <path d="M1 3h5v4H1zM9 3h5v4H9zM6 4h3M14 3h2" fill="#dfe6ff" stroke="#1b2370" strokeWidth="1.300" />
        <path d="M8 9.500l6 3-6 3z" fill="#24c052" />
      </Svg>
    </div>
    <div className="flex min-h-0 flex-1">
      <ParamNav />
      <div className="flex w-2 flex-col justify-center border-x border-[#888] bg-[#dadada]">
        <Arrow dir="right" className="-ml-1 mb-6 rotate-180" />
        <Arrow dir="right" className="-ml-px" />
      </div>
      <main className="min-w-0 flex-1 overflow-hidden pl-3">
        <div className="flex h-12 items-center pb-[6px]">
          <svg width="6" height="8" viewBox="0 0 6 8" fill="none" stroke="#000" strokeWidth="2" aria-hidden="true"><path d="M1 1l3 3-3 3" /></svg>
          <h2 className="ml-3 text-[15px]">主动</h2>
          <span className="ml-[9px] mt-[11px] h-px flex-1 bg-black" />
        </div>
        <HomingForm />
      </main>
      <div className="flex w-[18px] shrink-0 flex-col bg-[#c3c3c3]">
        <ScrollButton dir="up" />
        <div className="mt-px flex flex-[676] items-center justify-center border border-[#8b8b8b] bg-linear-to-r from-[#f4f4f4] to-[#d2d2d2]"><Grip /></div>
        <div className="flex-[117]" />
        <ScrollButton dir="down" />
      </div>
    </div>
    <div className="flex h-7 shrink-0 items-end justify-end gap-[2px] whitespace-nowrap border-b border-t-[3px] border-b-[#efefef] border-t-[#1f2437] bg-[#b1b1b1] pr-[5px] text-[15px] font-medium text-[#666]">
      <button className="flex h-[21px] w-[75px] items-center gap-[3px] border border-b-0 border-[#777] bg-linear-to-b from-[#e2e2e2] to-[#c8c8c8] pl-[2px]">
        <Svg><Page /><circle cx="9" cy="7" r="3.500" fill="#dce9ff" stroke="#34406e" /><path d="M11 10l4 4" stroke="#b06a20" strokeWidth="2" /></Svg>
        属性
      </button>
      <button className="flex h-[21px] w-[80px] items-center gap-[3px] border border-b-0 border-[#777] bg-[#e9e9e9] pl-[2px] text-black">
        <Svg><Page /><path d="M0 3h5M3 1l2 2-2 2M16 13h-5M14 11l2 2-2 2" fill="none" stroke="#0a1560" strokeWidth="1.400" /><path d="M8.500 4v2M7 7.500h2v5M6.500 12.500h5" fill="none" stroke="#0a1560" strokeWidth="1.600" /></Svg>
        信息
        <Svg size={14} className="ml-auto mr-1"><circle cx="8" cy="8" r="7.500" fill="#f8cf1d" stroke="#b9910b" /><path d="M8 3v2.500M8 7v6" stroke="#000" strokeWidth="2" /></Svg>
      </button>
      <button className="flex h-[21px] w-[75px] items-center gap-[3px] border border-b-0 border-[#777] bg-linear-to-b from-[#e2e2e2] to-[#c8c8c8] pl-[2px]">
        <Svg><Page /><Scope /></Svg>
        诊断
      </button>
      <div className="ml-[18px] flex items-center gap-[7px] self-center text-white">
        <svg width="11" height="12" viewBox="0 0 11 12" fill="currentColor" aria-hidden="true"><path d="M3 0h8v8H9V2H3zM0 4h8v8H0z" /></svg>
        <svg width="11" height="12" viewBox="0 0 11 12" stroke="currentColor" fill="none" aria-hidden="true"><path d="M0 1h11M0 3.500h11M0 6h11M0 8.500h11M0 11h11" /></svg>
        <svg width="12" height="7" viewBox="0 0 12 7" fill="currentColor" aria-hidden="true"><path d="M0 7h12L6 0z" /></svg>
      </div>
    </div>
    <SpeedBall />
  </section>
);

/* ---------- side rails ---------- */

const LeftRail = () => (
  <div className="flex w-6 shrink-0 flex-col border-r border-[#1f2437] bg-[#b1b1b1]">
    <div className="h-[25px] border-b border-white" />
    <div className="flex h-[221px] items-center justify-center border-b border-white pr-1">
      <span className="rotate-180 text-[15px] leading-5 text-white [text-orientation:sideways] [writing-mode:vertical-rl]">启动</span>
    </div>
  </div>
);

const RightRail = () => (
  <div className="flex w-[25px] shrink-0 flex-col border-l border-[#1f2437] bg-[#b1b1b1]">
    <div className="flex h-[30px] items-center pb-[6px] pl-[6px]">
      <svg width="7" height="12" viewBox="0 0 7 12" fill="#fff" aria-hidden="true"><path d="M7 0v12L0 6z" /></svg>
    </div>
    <button className="flex h-[74px] w-[21px] flex-col items-center gap-1 border border-l-0 border-[#777] bg-[#f0f0f0] pt-[2px] text-[15px] font-medium leading-5">
      <Svg><path d="M1.500 2.500h11v12h-11z" fill="#fff" stroke="#c09a3c" /><path d="M4 1h6v3H4z" fill="#888" /><path d="M4 6h6M4 8.500h6M4 11h4" stroke="#1c2a7e" /><path d="M7 11l3 3 5-7" fill="none" stroke="#149a2a" strokeWidth="2.500" /></Svg>
      <span className="[text-orientation:sideways] [writing-mode:vertical-rl]">任务</span>
    </button>
    <button className="mt-[2px] flex h-[58px] w-[21px] flex-col items-center gap-1 border border-l-0 border-[#777] bg-[#d6d6d6] pt-[2px] text-[15px] font-medium leading-5 text-[#555]">
      <Svg><path d="M1 2h7v11H1zM8 2h7v11H8z" fill="#f4f7ff" stroke="#2c42c8" /><path d="M1 14h14" stroke="#14206e" strokeWidth="2" /></Svg>
      <span className="[text-orientation:sideways] [writing-mode:vertical-rl]">库</span>
    </button>
  </div>
);

/* ---------- bottom bars ---------- */

const PortalBar = () => (
  <div className="flex h-[29px] shrink-0 items-center bg-[#1c1c1c] pb-px text-[13px] text-white">
    <svg width="7" height="12" viewBox="0 0 7 12" className="ml-9 mt-[2px]" fill="#fff" aria-hidden="true"><path d="M7 0v12L0 6z" /></svg>
    <button className="ml-[10px] mt-[2px] w-[128px] text-left text-sm font-medium">Portal 视图</button>
    <button className="flex h-5 w-[113px] items-center gap-[5px] bg-[#ccc] pl-[3px] text-black">
      <Svg><path d="M0 1h16v14H0z" fill="#f4f7ff" /><path d="M0 1h16v2H0zM0 1h2v14H0z" fill="#2b5a9a" /><path d="M6 6h3M11 6h3M6 9.500h3M11 9.500h3M6 13h3M11 13h3" stroke="#a06a16" strokeWidth="1.500" /></Svg>
      总览
    </button>
    <button className="ml-[3px] flex h-5 w-[113px] items-center gap-[5px] whitespace-nowrap bg-white pl-[3px] text-[13px] font-semibold text-black">
      <Svg><Toolbox /></Svg>
      1#焊钉X轴
    </button>
    <div className="ml-auto flex w-[338px] items-center">
      <span className="flex h-5 w-5 items-center justify-center bg-[#ccc]">
        <Svg><path d="M1 1h8v9H1z" fill="#fff" /><path d="M2 3h6M2 5h6M2 7h6" stroke="#999" /><path d="M0 11h16v4H0z" fill="#0c1250" /><path d="M2 13h3M7 13h3M12 13h3" stroke="#fff" /><path d="M13 10V4M11 5l2-2 2 2" stroke="#0c1250" strokeWidth="1.500" fill="none" /></Svg>
      </span>
      <span className="ml-[6px] mr-[3px] h-[27px] w-px bg-[#555]" />
      <Svg><circle cx="8" cy="8" r="7.500" fill="#1010ff" /><path d="M4 8.500l3 3 5.500-6" fill="none" stroke="#fff" strokeWidth="2" /></Svg>
      <span className="ml-[5px]">项目 芜湖空调底板 已打开<Mark>。</Mark></span>
    </div>
  </div>
);

const trayIcons = [
  <Fragment key="k"><path d="M0 7h16v7H0z" fill="#c4c8cc" stroke="#555" /><path d="M7 7c0-4 3-2 6-5" fill="none" stroke="#ccc" /><path d="M2 9h12M2 11.500h12" stroke="#555" strokeDasharray="1 1" /></Fragment>,
  null,
  <Fragment key="u"><path d="M2 1h5v9H2z" fill="#b7bcc2" /><circle cx="11" cy="10.500" r="5" fill="#2fae3b" /><path d="M8.500 10.500l2 2 3-4" stroke="#fff" strokeWidth="1.500" fill="none" /></Fragment>,
  null,
  <Fragment key="s"><path d="M2 13c4-2 8-6 12-12l-2 8 4 5-7-3-5 4z" fill="#a9afb5" stroke="#444" /><path d="M0 0l5 5M5 0L0 5" stroke="#111" /></Fragment>,
  null,
  <Fragment key="g"><circle cx="8" cy="8" r="7.500" fill="#f2dc1c" /><path d="M8 0a8 8 0 0 1 0 15" fill="#1f9a32" /><circle cx="8" cy="8" r="5" fill="#f2dc1c" /><path d="M8 4v8M4 8h8" stroke="#14752a" strokeWidth="2.500" /></Fragment>,
  <Fragment key="v"><path d="M1 5h3l4-4v14l-4-4H1z" fill="#fff" /><path d="M10 5c2 2 2 4 0 6M12 3c3 3 3 7 0 10" fill="none" stroke="#fff" /></Fragment>,
  <Fragment key="n"><path d="M4 2h11v8H4zM1 1v7M3 12h8" fill="none" stroke="#fff" strokeWidth="1.500" /><path d="M10 5l6 10H5z" fill="#f8cf1d" stroke="#8a6d00" /><path d="M10.500 8v4" stroke="#000" strokeWidth="1.500" /></Fragment>,
];

const trayText = {
  1: <span className="flex h-4 w-4 flex-col bg-[#333a4c] text-[6px] leading-2"><span>LICEN</span><span className="text-right font-bold text-[#a9b2e6]">MA</span></span>,
  3: <span className="flex h-4 w-4 flex-col bg-[#3c36b0] text-[7px] leading-2"><span>Cfle</span><span className="text-right">ES</span></span>,
  5: <span className="flex h-[14px] w-[14px] items-center justify-center bg-[#8b9096] text-[8px] font-bold leading-none">vm</span>,
};

const Taskbar = () => (
  <footer className="relative flex h-10 shrink-0 items-center overflow-hidden border-t border-[#8a9199] bg-[linear-gradient(to_right,#1d5a92,#2b7cb4_5%,#2a7ab4_12%,#4ba6d8_16%,#55b0e0_24%,#3593cf_36%,#2680c8_52%,#2170bb_68%,#1d5fa8_81%,#174880_83%,#164272)] text-xs text-white">
    <div className="absolute inset-x-0 top-0 h-[10px] bg-linear-to-b from-[#1a2532] to-transparent" />
    <svg width="70" height="34" viewBox="0 0 70 34" className="absolute left-[69%] top-[6px]" aria-hidden="true">
      <path d="M-4 0Q22 12 42 34h12Q34 10 12 0z" fill="#7fb8ef" opacity=".6" />
      <path d="M0 0Q24 12 45 34h6Q30 10 8 0z" fill="#b5dafc" />
    </svg>
    <button aria-label="开始" className="relative ml-2 flex">
      <svg width="38" height="38" viewBox="0 0 38 38" aria-hidden="true">
        <circle cx="19" cy="19" r="17.500" fill="#1c4f7e" stroke="#7fb0d2" />
        <path d="M5 24a15 12 0 0 0 28 0c-6 3-20 3-28 0z" fill="#35c4f0" />
        <path d="M4 15a15.500 13 0 0 1 30 0c-8 4-22 4-30 0z" fill="#7da6c6" opacity=".6" />
        <path d="M11 10q4-2 8 0l-2 8q-4-2-8 0z" fill="#f0602a" />
        <path d="M20 10.500q5 2 10 0l-2 8q-5 2-10 0z" fill="#8cc63a" />
        <path d="M8.500 19.500q4-2 8 0l-2 8q-4-2-8 0z" fill="#3f9fe8" />
        <path d="M17.500 20q5 2 10 0l-2 8q-5 2-10 0z" fill="#fcc92e" />
      </svg>
    </button>
    <svg width="32" height="32" viewBox="0 0 32 32" className="relative ml-[22px]" aria-hidden="true">
      <path d="M2 8Q4 1 14 2q-2 6 1 13-14 2-13-7z" fill="#8fce1c" />
      <circle cx="23" cy="8" r="7.500" fill="#3f8fea" />
      <path d="M1 20q6 3 15-1 3 12-7 12-8-1-8-11z" fill="#f6c31c" />
      <circle cx="24" cy="22" r="8" fill="#dc4a40" />
    </svg>
    <div className="relative ml-[14px] flex h-[30px] w-[150px] items-center border border-[#6d8494] bg-[#3a3d41] px-[2px]">
      <svg width="20" height="20" viewBox="0 0 20 20" fill="none" className="shrink-0" aria-hidden="true">
        <path d="M16 14a6.500 6.500 0 1 1 1-4H5" stroke="#1a86f0" strokeWidth="3.500" />
        <path d="M2 18C-1 14 12 0 18 3" stroke="#1a86f0" strokeWidth="1.500" />
      </svg>
      <input aria-label="搜索" placeholder="搜索网页和文件" className="ml-1 min-w-0 flex-1 bg-transparent placeholder:text-[#a5a5a5]" />
      <svg width="18" height="18" viewBox="0 0 18 18" fill="none" stroke="#8a8a8a" strokeWidth="1.300" className="mr-[2px] shrink-0" aria-hidden="true">
        <circle cx="8" cy="8" r="7" /><path d="M13 13l4 4" />
      </svg>
    </div>
    <svg width="32" height="32" viewBox="0 0 32 32" fill="none" className="relative ml-5" aria-hidden="true">
      <path d="M26 23a10.500 10.500 0 1 1 2-7H9" stroke="#6cc9f6" strokeWidth="5.500" />
      <path d="M3 29C-3 22 20-3 29 3q2 2 0 6" stroke="#f2c32c" strokeWidth="2.500" />
    </svg>
    <button aria-label="资源管理器" className="relative ml-4 flex h-[38px] w-[58px] items-center justify-center rounded-xs border border-[#d7ecf8] bg-linear-to-br from-[#b9d6e6] to-[#6bb5dd]">
      <svg width="34" height="30" viewBox="0 0 34 30" aria-hidden="true">
        <path d="M2 3h10l2 2h10l2 2h6v20H2z" fill="#f5dc7e" stroke="#c9a63e" />
        <path d="M5 2h3v2H5z" fill="#14b02c" /><path d="M14 4h3v2h-3z" fill="#e03a2a" /><path d="M22 6h3v2h-3z" fill="#2a7ae0" />
        <path d="M7 29V18h22v11h-5v-6H12v6z" fill="#9fdcf4" stroke="#5fb2d8" />
      </svg>
    </button>
    <button className="relative ml-1 flex h-[38px] w-[59px] items-center justify-center rounded-xs border border-white bg-linear-to-br from-[#d9e2e8] to-[#97cfec]">
      <span className="flex h-8 w-8 flex-col bg-[#30364a] text-left font-['Liberation_Sans',sans-serif] text-base font-bold leading-4">
        <span>TIA</span>
        <span className="text-[#9aa6e2]">V14</span>
      </span>
    </button>
    <div className="relative ml-auto flex items-center gap-2 pr-[14px]">
      {trayIcons.map((icon, i) => (
        <span key={i} className="flex w-4 justify-center">{trayText[i] || <Svg>{icon}</Svg>}</span>
      ))}
    </div>
    <div className="relative w-[64px] whitespace-nowrap text-center leading-[18px]">
      <p>16:05</p>
      <p>2020/6/14</p>
    </div>
    <button aria-label="显示桌面" className="relative ml-[6px] h-full w-[14px] border border-[#6f8ca6] bg-linear-to-b from-[#5d7488] to-[#1c3c5c]" />
  </footer>
);

const App = () => {
  return (
    <div className="flex h-screen w-full flex-col overflow-hidden bg-[#ccc] font-['Noto_Sans','Noto_Sans_CJK_SC',sans-serif] text-black">
      <Header />
      <div className="flex min-h-0 flex-1 border-t border-[#1f2437]">
        <LeftRail />
        <ProjectTree />
        <Editor />
        <RightRail />
      </div>
      <PortalBar />
      <Taskbar />
    </div>
  );
};

export default App;
